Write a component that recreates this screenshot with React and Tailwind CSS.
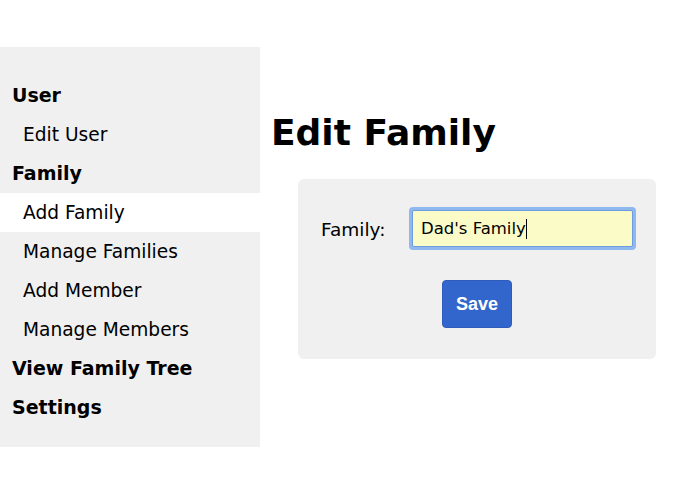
export default function App() {
  const font = { fontFamily: '"DejaVu Sans", Verdana, sans-serif' };
  const head = "h-[39px] flex items-center pl-[12px] font-bold text-[19px]";
  const item = "h-[39px] flex items-center pl-[23px] text-[18.6px]";
  return (
    <div className="w-[695px] h-[494px] bg-white flex text-black" style={font}>
      <div className="w-[260px] mt-[47px] h-[400px] bg-[#f0f0f0] pt-[29px] flex flex-col">
        <div className={head}>User</div>
        <div className={item}>Edit User</div>
        <div className={head}>Family</div>
        <div className={item + " bg-white"}>Add Family</div>
        <div className={item}>Manage Families</div>
        <div className={item}>Add Member</div>
        <div className={item}>Manage Members</div>
        <div className={head}>View Family Tree</div>
        <div className={head}>Settings</div>
      </div>
      <div className="flex-1 pl-[11px]">
        <h1 className="mt-[111px] text-[36px] font-bold leading-[44px] h-[44px]">Edit Family</h1>
        <div className="ml-[27px] mt-[24px] w-[358px] h-[180px] bg-[#f0f0f0] rounded-[6px] flex flex-col">
          <div className="flex items-center mt-[28px] ml-[23px]">
            <span className="text-[18.5px] w-[88px] pt-[2px]">Family:</span>
            <div className="w-[227px] h-[43px] rounded-[4px] bg-[#8fb8ee] p-[3px]">
              <div className="w-full h-full bg-[#fbfbc8] border border-[#6d9de0] rounded-[2px] flex items-center pl-[8px] text-[16.5px] pt-[1px]">
                Dad's Family<span className="inline-block w-[1px] h-[20px] bg-black"></span>
              </div>
            </div>
          </div>
          <div className="flex justify-center mt-[30px]">
            <button
              className="w-[70px] h-[48px] rounded-[4px] bg-[#3366cc] text-white font-bold text-[18px] border border-[#2f5cb8]"
              style={{ fontFamily: '"Liberation Sans", Arial, sans-serif' }}
            >
              Save
            </button>
          </div>
        </div>
      </div>
    </div>
  );
}
